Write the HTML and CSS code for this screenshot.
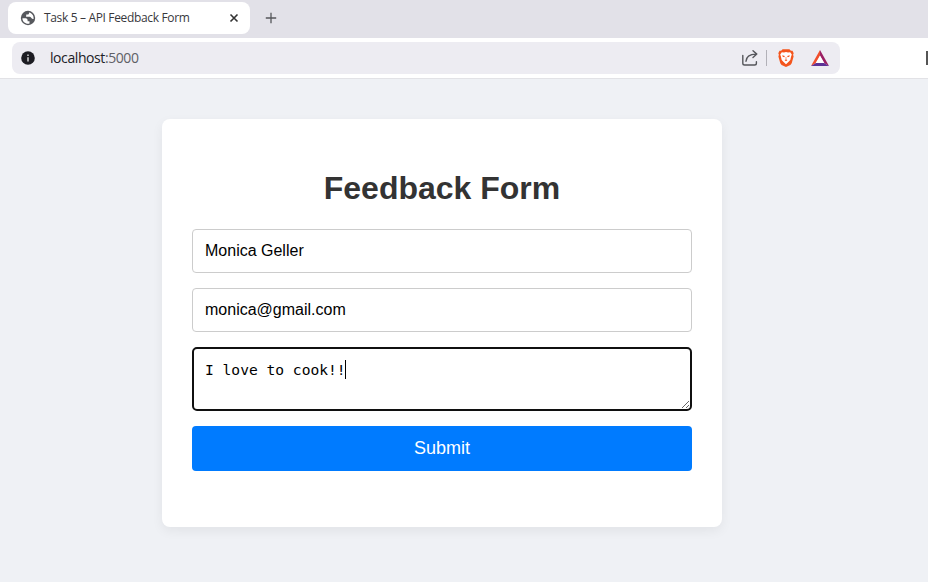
FILE: index.html
```html
<!DOCTYPE html>
<html lang="en">
<head>
<meta charset="utf-8">
<title>Task 5 – API Feedback Form</title>
<link rel="stylesheet" href="styles.css">
</head>
<body>
<div class="tabstrip">
  <div class="tab">
    <svg class="globe" width="16" height="16" viewBox="0 0 16 16"><circle cx="8" cy="8" r="7.200" fill="#56585d"/><path d="M2.400 8.200h3.200c1.200 0 2 .9 2 2v1h1.900v2.300c-3.400.9-7.100-1.500-7.100-5.300zM9 2.600v.6c0 .8-.7 1.300-1.500 1.300H6.200v1.400c0 .5-.4.9-.9.900h4.300c1.500 0 1.700 2.200 3.200 2.200h.8C13.900 5.700 12 3.100 9 2.600z" fill="#fff"/></svg>
    <span class="tab-title">Task 5 – API Feedback Form</span>
    <svg class="close" width="10" height="10" viewBox="0 0 10 10"><path d="M1.500 1.500l7 7M8.500 1.500l-7 7" stroke="#333" stroke-width="1.600"/></svg>
  </div>
  <svg class="plus" width="12" height="12" viewBox="0 0 12 12"><path d="M6 .8v10.400M.8 6h10.400" stroke="#55565a" stroke-width="1.300"/></svg>
</div>
<div class="toolbar">
  <div class="address">
    <svg class="info" width="14" height="14" viewBox="0 0 14 14"><circle cx="7" cy="7" r="6.800" fill="#1c1c22"/><path d="M7 6.200v4.300M7 3.500v1.500" stroke="#eee" stroke-width="1.300"/></svg>
    <span class="host">localhost<span class="port">:5000</span></span>
    <svg class="share" width="18" height="18" viewBox="0 0 18 18" fill="none" stroke="#55565b" stroke-width="1.400" stroke-linecap="round" stroke-linejoin="round"><path d="M1.800 6.500v7.700c0 1.100.7 1.800 1.800 1.800h10c1.100 0 1.800-.7 1.800-1.800v-1.400M5 12.300c.3-4.300 3-7.200 9.800-7.200M12 1.800l3.800 3.300L12 8.500"/></svg>
    <span class="divider"></span>
    <svg class="shield" width="16" height="18" viewBox="0 0 16 18"><path d="M4.600.2h6.800l1.500 1.600 1.600-.1 1.200 2.600-.6 1.500.5 1.600-1.900 6.900-1.300 1.600L8 18l-4.400-2.100-1.300-1.600L.4 7.400l.5-1.600-.6-1.500 1.200-2.600 1.600.1z" fill="#f4551d"/><path d="M3.800 3.200L6 3.500l2-.4 2 .4 2.200-.3 1.600 2.200-.7 2-.8 3.500-1.900 2.200L8 15.200l-2.400-2.100-1.900-2.200-.8-3.500-.7-2z" fill="#fff"/><path d="M4.200 6.300l2.700.7-.7 1.200-1.500-.5zM11.800 6.300l-2.700.7.7 1.200 1.500-.5zM6.500 11l1.500-.6 1.500.6L8 12.200zM7.700 8h.6v2.500h-.6z" fill="#f4551d"/></svg>
    <svg class="bat" width="18" height="16" viewBox="0 0 18 16"><path d="M9 0L0 16l5-3 4-7z" fill="#f04e2d"/><path d="M9 0l9 16-5-3-4-7z" fill="#9b1f63"/><path d="M0 16h18l-5-3H5z" fill="#5d3296"/><path d="M9 5.500L4.700 13h8.600z" fill="#fff"/></svg>
  </div>
  <span class="edge"></span>
</div>
<main>
  <form class="card">
    <h1>Feedback Form</h1>
    <input class="field" type="text" value="Monica Geller">
    <input class="field" type="text" value="monica@gmail.com">
    <div class="message">
      <textarea class="field" spellcheck="false">I love to cook!!</textarea>
      <span class="caret"></span>
    </div>
    <button type="button">Submit</button>
  </form>
</main>
</body>
</html>
```
FILE: styles.css
```css
* { box-sizing: border-box; }
body {
  margin: 0;
  height: 582px;
  overflow: hidden;
  background: #eff1f5;
  font-family: "Liberation Sans", Arial, sans-serif;
}
svg { display: block; flex: none; }
.tabstrip {
  display: flex;
  align-items: center;
  height: 38px;
  padding: 0 8px 2px;
  background: #e2e1e8;
}
.tab {
  display: flex;
  align-items: center;
  width: 242px;
  height: 32px;
  padding: 0 11px 0 12px;
  border-radius: 8px;
  background: #fff;
}
.tab-title {
  margin-left: 8px;
  font: 12px/16px "Open Sans", sans-serif;
  letter-spacing: -0.34px;
  white-space: nowrap;
  color: #38383d;
}
.close { margin-left: auto; }
.plus { margin-left: 15px; }
.toolbar {
  display: flex;
  align-items: center;
  justify-content: space-between;
  height: 41px;
  padding-left: 12px;
  background: #fff;
  border-bottom: 1px solid #e2e2e6;
}
.address {
  display: flex;
  align-items: center;
  width: 828px;
  height: 32px;
  padding: 0 11px 0 9px;
  border-radius: 8px;
  background: #edecf2;
}
.host {
  margin-left: 15px;
  font: 14px/20px "Open Sans", sans-serif;
  letter-spacing: -0.42px;
  color: #202026;
}
.port { color: #606066; }
.share { margin-left: auto; }
.divider {
  width: 1px;
  height: 16px;
  margin: 0 11px 0 7px;
  background: #b2b1b8;
}
.bat { margin-left: 17px; }
.edge {
  width: 2px;
  height: 14px;
  background: #555;
}
.card {
  width: 560px;
  height: 408px;
  margin: 40px 0 0 162px;
  padding: 50px 30px 30px;
  border-radius: 8px;
  background: #fff;
  box-shadow: 0 4px 12px rgba(0, 0, 0, 0.06);
}
h1 {
  margin: 0 0 22px;
  font-size: 32px;
  line-height: 38px;
  text-align: center;
  color: #333;
}
.field {
  display: block;
  width: 100%;
  height: 44px;
  margin: 0 0 15px;
  padding: 0 12px;
  border: 1px solid #ccc;
  border-radius: 4px;
  outline: none;
  background: #fff;
  color: #000;
  font: 16px "Liberation Sans", Arial, sans-serif;
}
.message { position: relative; }
textarea.field {
  height: 64px;
  padding: 11px;
  border: 2px solid #101010;
  border-radius: 5px;
  font: 14.600px/19px "DejaVu Sans Mono", monospace;
}
.caret {
  position: absolute;
  left: 153px;
  top: 13px;
  width: 1px;
  height: 19px;
  background: #000;
}
button {
  display: block;
  width: 100%;
  height: 45px;
  padding: 0;
  border: 0;
  border-radius: 4px;
  background: #007bff;
  color: #fff;
  font: 18px "Liberation Sans", Arial, sans-serif;
}
```
